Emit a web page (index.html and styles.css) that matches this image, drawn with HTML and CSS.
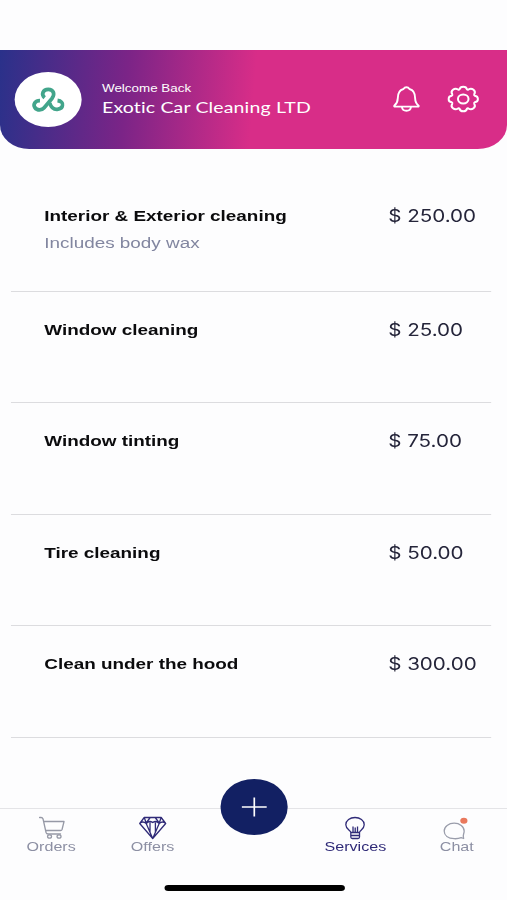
FILE: index.html
```html
<!DOCTYPE html>
<html lang="en">
<head>
<meta charset="utf-8">
<title>Services</title>
<link rel="stylesheet" href="styles.css">
</head>
<body>
<div class="screen">
  <header class="header">
    <div class="avatar">
      <svg class="icon logo" viewBox="0 0 34 26" preserveAspectRatio="none" fill="none" stroke="#42a58b" stroke-width="3.800">
        <path d="M8.500 13.600C3.500 13.500 1.200 17.500 3.200 20.500C5.700 23.800 10.500 23.500 12.800 20.800L20.800 11.500C24.500 6.800 22 2.300 17 2.300C11.500 2.300 9.500 7.500 13.300 10.800"/>
        <path d="M18.500 16C19.800 20 22.500 22.700 26.300 22.400C32.500 21.800 34.500 14.500 26.500 13.500"/>
      </svg>
    </div>
    <div class="greeting">
      <div class="welcome">Welcome Back</div>
      <div class="company">Exotic Car Cleaning LTD</div>
    </div>
    <div class="actions">
      <svg class="icon bell" viewBox="0 0 28 28" preserveAspectRatio="none" fill="none" stroke="#fff" stroke-width="1.900" stroke-linejoin="round" stroke-linecap="round">
        <path d="M1.800 20.800C4.500 18.500 5.300 16.500 5.300 13.500C5.300 8.500 7 5 11 4C12.500 1.700 15.500 1.700 17 4C21 5 22.700 8.500 22.700 13.500C22.700 16.500 23.500 18.500 26.200 20.800Q26.500 21.600 25.500 21.600H2.500Q1.500 21.600 1.800 20.800Z"/>
        <path d="M9.500 22C10 27 18 27 18.500 22"/>
      </svg>
      <svg class="icon gear" viewBox="0 0 32 28" preserveAspectRatio="none" fill="none" stroke="#fff" stroke-width="2" stroke-linejoin="round">
        <path d="M12.300 4.300C13 0.800 19 0.800 19.700 4.300Q20.300 4.900 21.200 4.500C24.800 2.300 29.300 5.800 27 9.300Q26.700 10.200 27.500 10.700C31.800 11.300 31.800 16.700 27.500 17.300Q26.700 17.800 27 18.700C29.300 22.200 24.800 25.700 21.200 23.500Q20.300 23.100 19.700 23.700C19 27.200 13 27.200 12.300 23.700Q11.700 23.100 10.800 23.500C7.200 25.700 2.700 22.200 5 18.700Q5.300 17.800 4.500 17.300C0.200 16.700 0.200 11.300 4.500 10.700Q5.300 10.200 5 9.300C2.700 5.800 7.200 2.300 10.800 4.500Q11.700 4.900 12.300 4.300Z"/>
        <ellipse cx="16" cy="14" rx="5.300" ry="4.400"/>
      </svg>
    </div>
  </header>

  <main class="services">
    <section class="service">
      <div class="info"><div class="name">Interior &amp; Exterior cleaning</div><div class="note">Includes body wax</div></div>
      <div class="price">$ 250.00</div>
    </section>
    <section class="service">
      <div class="info"><div class="name">Window cleaning</div></div>
      <div class="price">$ 25.00</div>
    </section>
    <section class="service">
      <div class="info"><div class="name">Window tinting</div></div>
      <div class="price">$ 75.00</div>
    </section>
    <section class="service">
      <div class="info"><div class="name">Tire cleaning</div></div>
      <div class="price">$ 50.00</div>
    </section>
    <section class="service">
      <div class="info"><div class="name">Clean under the hood</div></div>
      <div class="price">$ 300.00</div>
    </section>
  </main>

  <nav class="tabs">
    <div class="tab">
      <svg class="icon tab-icon" viewBox="0 0 30 24" preserveAspectRatio="none" fill="none" stroke="#9699a6" stroke-width="1.300" stroke-linejoin="round" stroke-linecap="round">
        <path d="M3 1.500H4.500Q6 1.500 6.500 3L9.500 16.500Q10 18 11.500 18H24M7.500 5.500H27.500L25.500 13.500Q25.200 14.500 24 14.500H9"/>
        <ellipse cx="13" cy="20.500" rx="2" ry="1.700"/><ellipse cx="22.500" cy="20.500" rx="2" ry="1.700"/>
      </svg>
      <span>Orders</span>
    </div>
    <div class="tab">
      <svg class="icon tab-icon" viewBox="0 0 30 24" preserveAspectRatio="none" fill="none" stroke="#302b78" stroke-width="1.300" stroke-linejoin="round">
        <path d="M6.500 1.500H23.500L28 7.500L15 22.500L2 7.500ZM2 7.500Q5 4.500 8.500 7.500Q11.500 4 15 6.500Q18.500 4 21.500 7.500Q25 4.500 28 7.500M8.500 7.500L15 22.500L21.500 7.500M6.500 1.500L8.500 7M12.500 1.500L8.500 7M23.500 1.500L21.500 7M17.500 1.500L21.500 7M12.300 6.500V16M17.700 6.500V16"/>
      </svg>
      <span>Offers</span>
    </div>
    <div class="tab">
      <div class="add">
        <svg class="icon plus" viewBox="0 0 26 20" preserveAspectRatio="none" stroke="#fff" fill="none" stroke-width="1.700"><path d="M0.500 10H25.500M13 0.500V19.500"/></svg>
      </div>
    </div>
    <div class="tab active">
      <svg class="icon tab-icon" viewBox="0 0 30 24" preserveAspectRatio="none" fill="none" stroke="#302b78" stroke-width="1.300" stroke-linejoin="round">
        <path d="M10.800 16.500C10.800 14.500 5.800 13.500 5.800 8.700C5.800 4.500 10 1.500 15 1.500S24.200 4.500 24.200 8.700C24.200 13.500 19.500 14.500 19.500 16.500V21Q19.500 22.500 18 22.500H12.300Q10.800 22.500 10.800 21ZM10.800 16.500H19.500M10.800 19.500H19.500M13 10.500V16.500M15.200 11.500V16.500M17.500 10.500V16.500"/>
      </svg>
      <span>Services</span>
    </div>
    <div class="tab">
      <svg class="icon tab-icon" viewBox="0 0 30 24" preserveAspectRatio="none" fill="none" stroke="#9a9dab" stroke-width="1.300" stroke-linejoin="round">
        <path d="M22.500 22.500L20 21.700Q17 22.900 13 22.700C7 22.500 3 19.500 3 15C3 10.500 7.500 7.200 13 7.200S23 10.500 23 15C23 18 21 19.500 22.500 22.500Z"/>
        <ellipse cx="22.700" cy="4.700" rx="3.600" ry="3" fill="#e9785c" stroke="none"/>
      </svg>
      <span>Chat</span>
    </div>
  </nav>
  <div class="home-bar"></div>
</div>
</body>
</html>
```
FILE: styles.css
```css
* { box-sizing: border-box; }
html { background: #fdfdfe; }
body { margin: 0; height: 900px; overflow: hidden; }
.screen {
  width: 416px;
  height: 900px;
  padding-top: 50px;
  display: flex;
  flex-direction: column;
  align-items: stretch;
  transform: scaleX(1.21875);
  transform-origin: 0 0;
  font-family: "Liberation Sans", Arial, sans-serif;
  white-space: nowrap;
}
.icon { display: block; flex: none; }

.header {
  flex: none;
  height: 99px;
  padding: 0 23.300px 0 11.500px;
  display: flex;
  align-items: center;
  color: #fff;
  background: linear-gradient(94deg, #2a318a 0%, #7b2487 25%, #d82d88 50%);
  border-radius: 0 0 24px 24px;
}
.avatar {
  flex: none;
  width: 55.500px;
  height: 55.500px;
  border-radius: 50%;
  background: #fff;
  display: flex;
  align-items: center;
  justify-content: center;
}
.logo { width: 27.200px; height: 26px; }
.greeting { margin-left: 16.700px; padding-bottom: 2px; flex: 1; }
.welcome { font-size: 11px; line-height: 16px; }
.company { font-family: Lato, sans-serif; font-size: 16px; letter-spacing: 0.120px; line-height: 22px; }
.actions { display: flex; align-items: center; gap: 21.300px; padding-bottom: 1px; }
.bell { width: 23px; height: 28px; }
.gear { width: 26.200px; height: 28px; }

.services {
  flex: none;
  padding-top: 31px;
  margin: 0 13.200px 0 9px;
}
.service {
  height: 111.600px;
  display: flex;
  padding: 26px 0 0 27.300px;
  border-bottom: 1.500px solid #dcdcdf;
}
.service:first-child { padding-top: 24px; }
.info { width: 282.200px; }
.name { font-size: 15.500px; line-height: 24px; font-weight: 700; color: #0b0b0d; }
.note { font-size: 15.500px; line-height: 24px; margin-top: 3px; color: #8286a0; }
.price { font-family: Inter, sans-serif; font-size: 16.900px; line-height: 24px; color: #25253a; }

.tabs {
  flex: none;
  margin-top: 70px;
  height: 64px;
  border-top: 1.500px solid #e4e4e7;
  display: grid;
  grid-template-columns: repeat(5, 1fr);
}
.tab {
  display: flex;
  flex-direction: column;
  align-items: center;
  padding: 7px 0 0 0.800px;
  font-size: 13.200px;
  line-height: 14px;
  color: #8c8fa3;
}
.tab.active { color: #302b78; }
.tab-icon { width: 24.600px; height: 24px; }
.add {
  width: 55.500px;
  height: 55.500px;
  margin-top: -36.500px;
  border-radius: 50%;
  background: #122063;
  display: flex;
  align-items: center;
  justify-content: center;
}
.plus { width: 21.300px; height: 20px; }
.home-bar {
  flex: none;
  width: 148px;
  height: 5.500px;
  margin: 13.500px 0 0 134.500px;
  border-radius: 3px;
  background: #000;
}
```
